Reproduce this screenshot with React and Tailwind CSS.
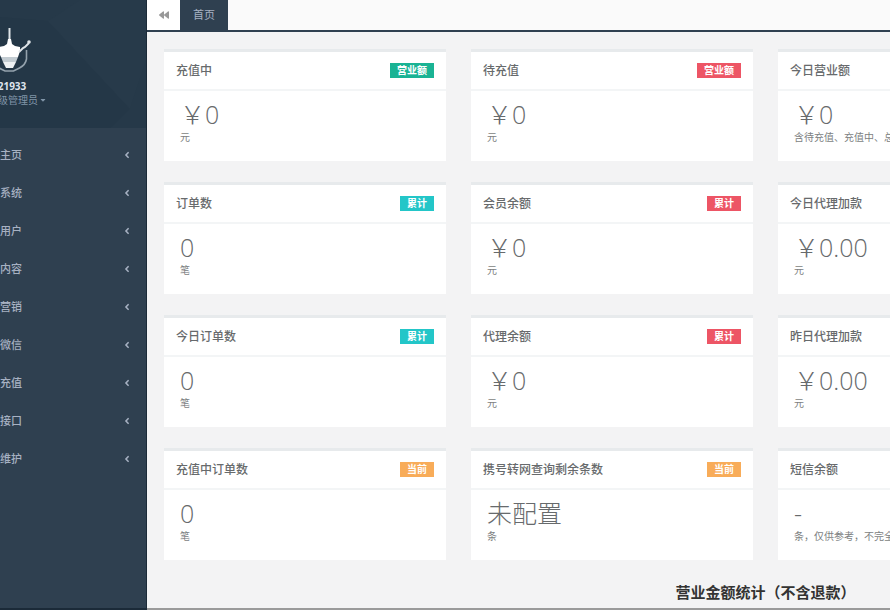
import { FaAngleLeft, FaBackward, FaCaretDown } from "react-icons/fa";

const menu = ["主页", "系统", "用户", "内容", "营销", "微信", "充值", "接口", "维护"];

const colors = {
  green: "bg-[#1ab394]",
  red: "bg-[#ed5565]",
  teal: "bg-[#23c6c8]",
  orange: "bg-[#f8ac59]",
};

const cards = [
  { title: "充值中", tag: "营业额", color: "green", value: "￥0", note: "元" },
  { title: "待充值", tag: "营业额", color: "red", value: "￥0", note: "元" },
  { title: "今日营业额", value: "￥0", note: "含待充值、充值中、总成功" },
  { title: "订单数", tag: "累计", color: "teal", value: "0", note: "笔" },
  { title: "会员余额", tag: "累计", color: "red", value: "￥0", note: "元" },
  { title: "今日代理加款", value: "￥0.00", note: "元" },
  { title: "今日订单数", tag: "累计", color: "teal", value: "0", note: "笔" },
  { title: "代理余额", tag: "累计", color: "red", value: "￥0", note: "元" },
  { title: "昨日代理加款", value: "￥0.00", note: "元" },
  { title: "充值中订单数", tag: "当前", color: "orange", value: "0", note: "笔" },
  { title: "携号转网查询剩余条数", tag: "当前", color: "orange", value: "未配置", note: "条" },
  { title: "短信余额", value: "-", note: "条，仅供参考，不完全准确" },
];

function Logo() {
  return (
    <svg viewBox="0 0 48 48" className="-ml-3 h-12 w-12" fill="none">
      <path d="M21.5 0v14" stroke="#dfe4e8" strokeWidth="2" />
      <path d="M20 11h3l1 5 3 2 5 1v4l-2 6H13l-3-6v-4l6-1 3-2z" fill="#fff" />
      <path d="M13 29h17l-2 5H15z" fill="#c3ccd2" />
      <path d="M15 34h13l-3 6h-7z" fill="#eef1f3" />
      <path d="M31 24l4-4 2-1 4-4" stroke="#dfe4e8" strokeWidth="2" />
      <circle cx="41" cy="14" r="1.8" fill="#dfe4e8" />
      <path d="M38.500 22v9q-1 6-7 9l-6 3H17l-6-3" stroke="#94a2ad" strokeWidth="1.6" />
    </svg>
  );
}

function Sidebar() {
  return (
    <aside className="w-[147px] shrink-0 overflow-hidden border-r border-b-2 border-[#1b2a38] bg-[#2f4050] text-[#a7b1c2]">
      <div className="relative h-32 overflow-hidden bg-[#263949] pt-7">
        <svg
          viewBox="0 0 146 128"
          preserveAspectRatio="none"
          className="absolute inset-0 h-full w-full"
        >
          <path d="M0 17l48 4 82 88-20 19H0z" fill="#243747" />
          <path d="M48 21L80 0h66v60l-16 49z" fill="#273a4a" />
        </svg>
        <div className="relative">
          <Logo />
          <p className="-ml-2 mt-1 text-[10px] leading-3 font-bold text-[#dfe4ed]">521933</p>
          <button className="-ml-3 flex items-center text-[10px] leading-4 whitespace-nowrap text-[#8095a8]">
            超级管理员
            <FaCaretDown className="ml-px h-2 w-2" />
          </button>
        </div>
      </div>
      <nav className="pt-2">
        {menu.map((name) => (
          <a
            key={name}
            href="#"
            className="flex h-[38px] items-center justify-between pr-3.5 text-[11px] font-medium"
          >
            {name}
            <FaAngleLeft className="h-2.5 w-2.5" />
          </a>
        ))}
      </nav>
    </aside>
  );
}

function Card({ title, tag, color, value, note }) {
  return (
    <section className="h-28 border-t-3 border-[#e7eaec] bg-white">
      <header className="flex h-[39px] items-center justify-between border-b-2 border-[#f3f5f6] px-3">
        <h2 className="text-xs font-medium whitespace-nowrap">{title}</h2>
        {tag && (
          <span
            className={`${colors[color]} px-[7px] text-[10px] leading-[15px] font-bold text-white`}
          >
            {tag}
          </span>
        )}
      </header>
      <div className="px-4 pt-2">
        <p className="text-[25px] leading-[30px] font-light whitespace-nowrap">{value}</p>
        <p className="mt-0.5 text-[10px] leading-3 whitespace-nowrap text-[#7d7f82]">{note}</p>
      </div>
    </section>
  );
}

function App() {
  return (
    <div className="flex min-h-screen overflow-hidden bg-[#f3f3f4] font-['Open_Sans','Noto_Sans_CJK_SC',sans-serif] text-[#676a6c]">
      <Sidebar />
      <main className="min-w-0 flex-1 overflow-hidden border-b-2 border-[#9a9a9a]">
        <div className="flex h-8 border-b-2 border-[#2f4050] bg-[#fafafa]">
          <button
            aria-label="后退"
            className="flex w-[33px] items-center justify-center bg-white text-[#999]"
          >
            <FaBackward className="h-2.5 w-2.5" />
          </button>
          <a
            href="#"
            className="flex w-12 items-center justify-center bg-[#2f4050] text-[11px] text-[#a7b1c2]"
          >
            首页
          </a>
        </div>
        <div className="min-w-[1220px] pt-[17px] pl-[17px]">
          <div className="grid grid-cols-4 gap-x-[25px] gap-y-[21px]">
            {cards.map((card, i) => (
              <div key={card.title} className={i % 3 === 0 ? "col-start-1" : ""}>
                <Card {...card} />
              </div>
            ))}
          </div>
          <h3 className="mt-5 text-center text-[15px] leading-6 font-bold text-[#333]">
            营业金额统计（不含退款）
          </h3>
        </div>
      </main>
    </div>
  );
}

export default App;
